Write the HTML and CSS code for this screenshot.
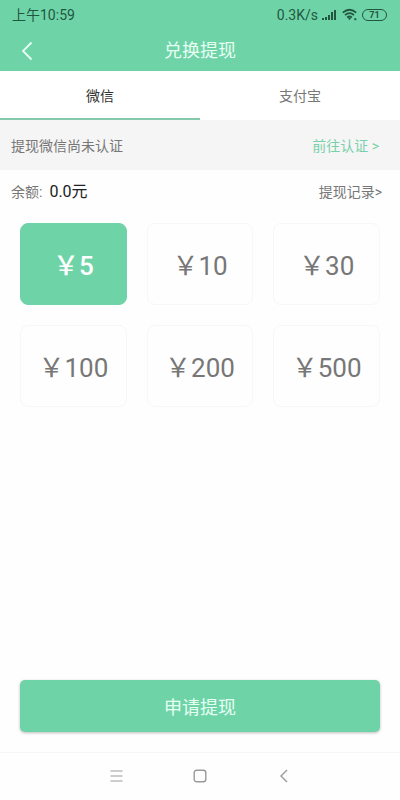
FILE: index.html
```html
<!DOCTYPE html>
<html lang="zh-CN">
<head>
<meta charset="utf-8">
<meta name="viewport" content="width=device-width, initial-scale=1">
<title>兑换提现</title>
<link rel="stylesheet" href="styles.css">
</head>
<body>
<header class="top">
  <div class="status">
    <span class="time">上午10:59</span>
    <div class="signals">
      <span>0.3K/s</span>
      <svg width="16" height="12" viewBox="0 0 16 12" fill="currentColor" aria-hidden="true"><path d="M0 9h2v2H0zM3 8h2v3H3zM6 6h2v5H6zM9 3h2v8H9zM12 1h2v10h-2z"/></svg>
      <svg class="wifi" width="16" height="14" viewBox="0 0 16 14" fill="none" stroke="currentColor" stroke-width="1.7" aria-hidden="true"><path d="M.8 4.7Q7.5-1.2 14.2 4.7M3 7.2Q7.5 3.2 12 7.2M5.2 9.5Q7.5 7.5 9.8 9.5"/><path d="M6 10.4Q7.5 9.3 9 10.4L7.5 12z" fill="currentColor" stroke="none"/><path d="M12.3 10.2h2v2h-2z" fill="currentColor" stroke="none"/></svg>
      <span class="battery">71</span>
    </div>
  </div>
  <div class="title-bar">
    <button class="back" type="button" aria-label="返回">
      <svg width="12" height="20" viewBox="0 0 12 20" fill="none" stroke="currentColor" stroke-width="1.8" aria-hidden="true"><path d="M10.5 1.5 2 10l8.500 8.500"/></svg>
    </button>
    <h1>兑换提现</h1>
  </div>
</header>
<nav class="tabs">
  <button class="tab active" type="button">微信</button>
  <button class="tab" type="button">支付宝</button>
</nav>
<main>
  <div class="row notice">
    <span>提现微信尚未认证</span>
    <a class="verify" href="#verify">前往认证 &gt;</a>
  </div>
  <div class="row balance">
    <div class="total"><span>余额:</span><strong>0.0元</strong></div>
    <a href="#records">提现记录&gt;</a>
  </div>
  <div class="amounts">
    <button class="amount selected" type="button">￥5</button>
    <button class="amount" type="button">￥10</button>
    <button class="amount" type="button">￥30</button>
    <button class="amount" type="button">￥100</button>
    <button class="amount" type="button">￥200</button>
    <button class="amount" type="button">￥500</button>
  </div>
  <button class="submit" type="button">申请提现</button>
</main>
<footer class="system-nav">
  <button type="button" aria-label="菜单"><svg width="14" height="14" viewBox="0 0 14 14" fill="none" stroke="currentColor" stroke-width="1.2" aria-hidden="true"><path d="M1.500 2h12M1.500 7h12M1.500 12h12"/></svg></button>
  <button type="button" aria-label="主页"><svg width="14" height="14" viewBox="0 0 14 14" fill="none" stroke="currentColor" stroke-width="1.4" aria-hidden="true"><rect x="1.200" y="1.200" width="11.600" height="11.600" rx="2.500"/></svg></button>
  <button type="button" aria-label="返回上一页"><svg width="14" height="14" viewBox="0 0 14 14" fill="none" stroke="currentColor" stroke-width="1.4" aria-hidden="true"><path d="M10 1 4 7l6 6"/></svg></button>
</footer>
</body>
</html>
```
FILE: styles.css
```css
* {
  box-sizing: border-box;
}

body {
  margin: 0;
  min-height: 100vh;
  display: flex;
  flex-direction: column;
  background: #fefefe;
  color: #777;
  font-family: Roboto, "Noto Sans CJK SC", sans-serif;
  font-size: 14px;
  line-height: 20px;
}

button {
  padding: 0;
  border: 0;
  background: none;
  color: inherit;
  font: inherit;
  cursor: pointer;
}

a {
  color: inherit;
  text-decoration: none;
}

svg {
  display: block;
}

.top {
  background: #6fd3a8;
}

.status {
  display: flex;
  justify-content: space-between;
  align-items: center;
  height: 30px;
  padding: 0 13px 0 12px;
  color: #22573f;
}

.signals {
  display: flex;
  align-items: center;
  gap: 4px;
}

.battery {
  width: 25px;
  border: 1px solid currentColor;
  border-radius: 6px;
  font-size: 9px;
  font-weight: 700;
  line-height: 10px;
  text-align: center;
}

.title-bar {
  display: grid;
  grid-template-columns: 40px 1fr 40px;
  align-items: center;
  height: 41px;
  color: #e6fff3;
}

.back {
  display: flex;
  padding-left: 21px;
}

h1 {
  margin: 0;
  font-size: 18px;
  font-weight: 400;
  line-height: 24px;
  text-align: center;
}

.tabs {
  display: grid;
  grid-template-columns: 1fr 1fr;
  background: #fff;
}

.tab {
  height: 49px;
  border-top: 2px solid transparent;
  border-bottom: 2px solid transparent;
}

.tab.active {
  border-bottom-color: #84c9ab;
  color: #333;
}

main {
  flex: 1;
  display: flex;
  flex-direction: column;
}

.row {
  display: flex;
  justify-content: space-between;
  align-items: center;
}

.notice {
  height: 50px;
  padding: 2px 21px 0 11px;
  background: #f5f5f5;
}

.verify {
  color: #79d0aa;
}

.balance {
  height: 44px;
  padding: 0 18px 0 11px;
}

.total {
  display: flex;
  align-items: center;
  gap: 7px;
}

.balance strong {
  color: #222;
  font-size: 16px;
  font-weight: 400;
}

.amounts {
  display: grid;
  grid-template-columns: repeat(3, 1fr);
  gap: 20px;
  padding: 9px 20px 20px;
}

.amount {
  height: 82px;
  padding-top: 3px;
  border: 1px solid #f7f7f7;
  border-radius: 8px;
  font-size: 26px;
  line-height: 36px;
}

.amount.selected {
  border-color: #6fd3a8;
  background: #6fd3a8;
  color: #fff;
  font-weight: 500;
}

.submit {
  height: 52px;
  margin: auto 20px 20px;
  padding-top: 3px;
  border-radius: 5px;
  background: #6fd3a8;
  box-shadow: 0 1px 3px #bbb;
  color: #e6fff3;
  font-size: 18px;
}

.system-nav {
  display: flex;
  justify-content: center;
  gap: 70px;
  height: 48px;
  padding-bottom: 1px;
  border-top: 1px solid #f5f5f5;
  color: #999;
}

.system-nav button {
  display: flex;
  align-items: center;
}
```
